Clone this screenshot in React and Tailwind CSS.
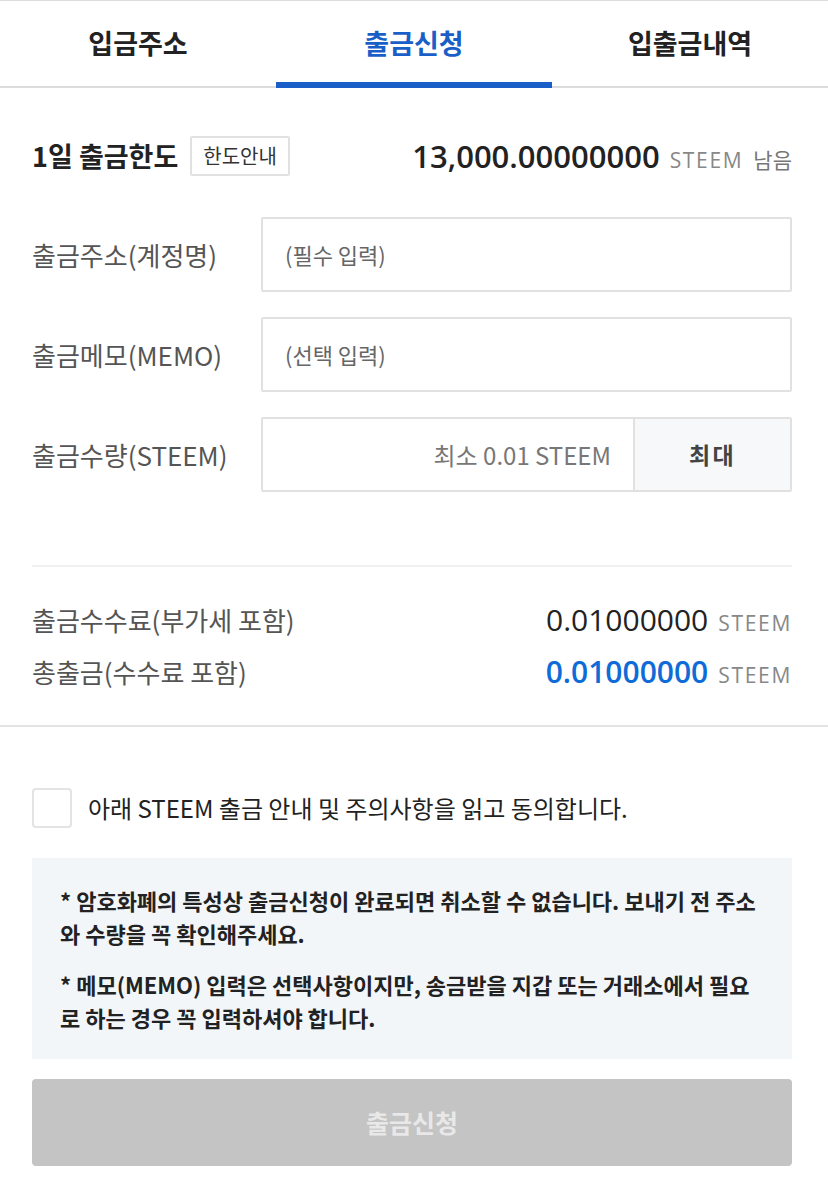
import React from 'react';

const kr = "font-['Noto_Sans_CJK_KR','Noto_Sans',sans-serif]";
const num = "font-['Open_Sans','Noto_Sans_CJK_KR',sans-serif]";

const Tabs = () => (
  <div className="flex border-t border-[#dcdcdc] border-b-2 border-b-[#dcdcdc] h-[88px]">
    <div className="flex-1 flex items-center justify-center text-[27px] font-bold text-[#222]">입금주소</div>
    <div className="flex-1 flex items-center justify-center text-[27px] font-bold text-[#1a5fc7] relative">
      출금신청
      <div className="absolute left-0 right-0 -bottom-[2px] h-[6px] bg-[#1a5fc7]"></div>
    </div>
    <div className="flex-1 flex items-center justify-center text-[27px] font-bold text-[#222]">입출금내역</div>
  </div>
);

const Field = ({ label, children }) => (
  <div className="flex items-center">
    <div className="w-[229px] text-[26px] text-[#555]">{label}</div>
    <div className="flex-1 h-[75px] border-2 border-[#e1e1e1] rounded-[2px] flex items-stretch">{children}</div>
  </div>
);

const Unit = ({ children }) => (
  <span className={`${num} text-[21px] text-[#888] tracking-[0.08em] ml-[10px]`}>{children}</span>
);

const App = () => {
  return (
    <div className={`w-[828px] min-h-[1182px] bg-white ${kr}`}>
      <Tabs />

      {/* Limit + form */}
      <div className="pl-8 pr-9 pt-[48px]">
        <div className="flex items-center justify-between h-[40px]">
          <div className="flex items-center gap-[12px]">
            <span className="text-[27px] font-bold text-[#222]">1일 출금한도</span>
            <span className="border-2 border-[#e1e1e1] rounded-[2px] px-[11px] h-[40px] flex items-center text-[20px] text-[#333]">한도안내</span>
          </div>
          <div className="flex items-baseline">
            <span className={`${num} text-[31px] font-semibold text-[#222]`}>13,000.00000000</span>
            <Unit>STEEM</Unit>
            <span className="text-[21px] text-[#777] ml-[10px]">남음</span>
          </div>
        </div>

        <div className="mt-[41px] flex flex-col gap-[25px]">
          <Field label="출금주소(계정명)">
            <div className="flex items-center px-[22px] text-[22px] text-[#666]">(필수 입력)</div>
          </Field>
          <Field label="출금메모(MEMO)">
            <div className="flex items-center px-[22px] text-[22px] text-[#666]">(선택 입력)</div>
          </Field>
          <Field label="출금수량(STEEM)">
            <div className="flex-1 flex items-center justify-end pr-[22px] text-[24px] text-[#777]">최소 0.01 STEEM</div>
            <div className="w-[157px] border-l-2 border-[#e1e1e1] bg-[#f6f8fa] flex items-center justify-center text-[23px] font-bold text-[#444] tracking-[0.1em]">최대</div>
          </Field>
        </div>

        <div className="mt-[73px] border-t-2 border-[#f0f0f0]"></div>

        <div className="pt-[32px] pb-[34px] flex flex-col gap-[12px]">
          <div className="flex items-center justify-between h-[40px]">
            <span className="text-[26px] text-[#555]">출금수수료(부가세 포함)</span>
            <div className="flex items-baseline">
              <span className={`${num} text-[30px] text-[#222]`}>0.01000000</span>
              <Unit>STEEM</Unit>
            </div>
          </div>
          <div className="flex items-center justify-between h-[40px]">
            <span className="text-[26px] text-[#555]">총출금(수수료 포함)</span>
            <div className="flex items-baseline">
              <span className={`${num} text-[30px] font-semibold text-[#0f6bd7]`}>0.01000000</span>
              <Unit>STEEM</Unit>
            </div>
          </div>
        </div>
      </div>

      <div className="border-t-2 border-[#e3e3e3]"></div>

      {/* Agreement */}
      <div className="pl-8 pr-9 pt-[61px] pb-[20px]">
        <label className="flex items-center gap-[16px] h-[40px]">
          <span className="w-[40px] h-[40px] border-2 border-[#e3e3e3] rounded-[4px] bg-white"></span>
          <span className="text-[24px] text-[#222]">아래 STEEM 출금 안내 및 주의사항을 읽고 동의합니다.</span>
        </label>

        <div className="mt-[30px] bg-[#f3f6f9] pl-[28px] pr-[30px] pt-[26px] pb-[25px] flex flex-col gap-[18px]">
          <p className="text-[22px] font-bold text-[#222] leading-[33px]">
            * 암호화폐의 특성상 출금신청이 완료되면 취소할 수 없습니다. 보내기 전 주소와 수량을 꼭 확인해주세요.
          </p>
          <p className="text-[22px] font-bold text-[#222] leading-[33px]">
            * 메모(MEMO) 입력은 선택사항이지만, 송금받을 지갑 또는 거래소에서 필요로 하는 경우 꼭 입력하셔야 합니다.
          </p>
        </div>

        <button className="mt-[20px] w-full h-[87px] bg-[#c4c4c4] rounded-[4px] text-[25px] font-bold text-[#e8e8e8]">
          출금신청
        </button>
      </div>
    </div>
  );
};

export default App;
